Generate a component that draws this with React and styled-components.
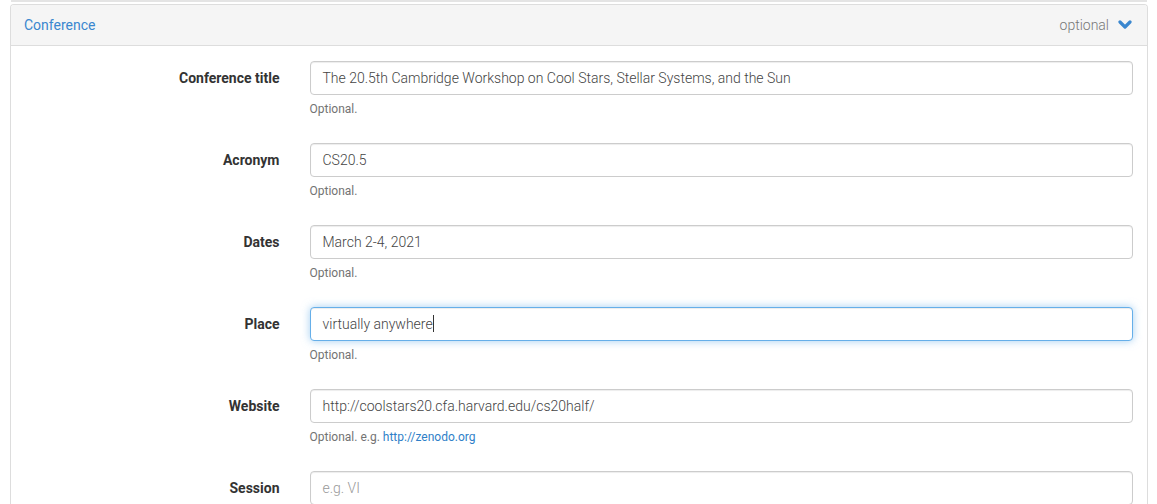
import styled, { createGlobalStyle } from "styled-components";

const GlobalStyle = createGlobalStyle`
  body {
    margin: 0;
    background: #fff;
    font-family: Roboto, "Liberation Sans", Arial, sans-serif;
    font-size: 14px;
    color: #333;
  }
`;

const Page = styled.div`
  padding: 0 9px 0 10px;
`;

const PrevPanelEdge = styled.div`
  height: 2px;
  background: #e4e4e4;
  margin: 0 1px 2px;
`;

const Panel = styled.div`
  border: 1px solid #ddd;
  border-bottom: none;
  border-radius: 4px 4px 0 0;
`;

const PanelHeader = styled.div`
  display: flex;
  align-items: center;
  justify-content: space-between;
  height: 40px;
  padding: 0 15px 0 13px;
  background: #f5f5f5;
  border-bottom: 1px solid #ddd;
  border-radius: 3px 3px 0 0;
`;

const HeaderTitle = styled.a`
  color: #3a87cf;
  text-decoration: none;
  font-size: 14px;
`;

const HeaderRight = styled.div`
  display: flex;
  align-items: center;
  gap: 9px;
  color: #777;
  font-size: 14px;
  font-weight: 300;
`;

const PanelBody = styled.div`
  padding: 15px 15px 0;
`;

const FormGroup = styled.div`
  display: grid;
  grid-template-columns: 25% 75%;
  margin: 0 -16px 15px;
`;

const Label = styled.label`
  padding: 7px 15px 0;
  text-align: right;
  font-weight: 700;
  font-size: 14px;
  line-height: 20px;
  color: #333;
`;

const FieldCol = styled.div`
  padding: 0 15px;
`;

const Field = styled.div`
  box-sizing: border-box;
  height: 34px;
  padding: 6px 12px;
  font-size: 14px;
  font-weight: 300;
  line-height: 20px;
  color: ${(p) => (p.$placeholder ? "#999" : "#444")};
  background: #fff;
  border: 1px solid ${(p) => (p.$focused ? "#66afe9" : "#ccc")};
  border-radius: 4px;
  box-shadow: ${(p) =>
    p.$focused
      ? "inset 0 1px 1px rgba(0,0,0,.075), 0 0 8px rgba(102,175,233,.6)"
      : "inset 0 1px 1px rgba(0,0,0,.075)"};
  white-space: nowrap;
  overflow: hidden;
`;

const Caret = styled.span`
  display: inline-block;
  width: 1px;
  height: 17px;
  background: #333;
  vertical-align: -3px;
`;

const Help = styled.div`
  margin: 5px 0 10px;
  font-size: 12px;
  line-height: 18px;
  color: #737373;
`;

const HelpLink = styled.a`
  color: #2f7fc8;
  text-decoration: none;
`;

const Chevron = () => (
  <svg width="14" height="10" viewBox="0 0 14 10">
    <polyline
      points="2,2 7,7 12,2"
      fill="none"
      stroke="#3a87cf"
      strokeWidth="3.2"
      strokeLinecap="round"
      strokeLinejoin="round"
    />
  </svg>
);

const fields = [
  { label: "Conference title", value: "The 20.5th Cambridge Workshop on Cool Stars, Stellar Systems, and the Sun" },
  { label: "Acronym", value: "CS20.5" },
  { label: "Dates", value: "March 2-4, 2021" },
  { label: "Place", value: "virtually anywhere", focused: true },
  { label: "Website", value: "http://coolstars20.cfa.harvard.edu/cs20half/", example: "http://zenodo.org" },
  { label: "Session", placeholder: "e.g. VI" },
];

const App = () => {
  return (
    <>
      <GlobalStyle />
      <Page>
        <PrevPanelEdge />
        <Panel>
          <PanelHeader>
            <HeaderTitle href="#">Conference</HeaderTitle>
            <HeaderRight>
              optional
              <Chevron />
            </HeaderRight>
          </PanelHeader>
          <PanelBody>
            {fields.map((f) => (
              <FormGroup key={f.label}>
                <Label>{f.label}</Label>
                <FieldCol>
                  <Field $focused={f.focused} $placeholder={!!f.placeholder}>
                    {f.value || f.placeholder}
                    {f.focused && <Caret />}
                  </Field>
                  <Help>
                    Optional.
                    {f.example && (
                      <>
                        {" "}e.g. <HelpLink href="#">{f.example}</HelpLink>
                      </>
                    )}
                  </Help>
                </FieldCol>
              </FormGroup>
            ))}
          </PanelBody>
        </Panel>
      </Page>
    </>
  );
};

export default App;
